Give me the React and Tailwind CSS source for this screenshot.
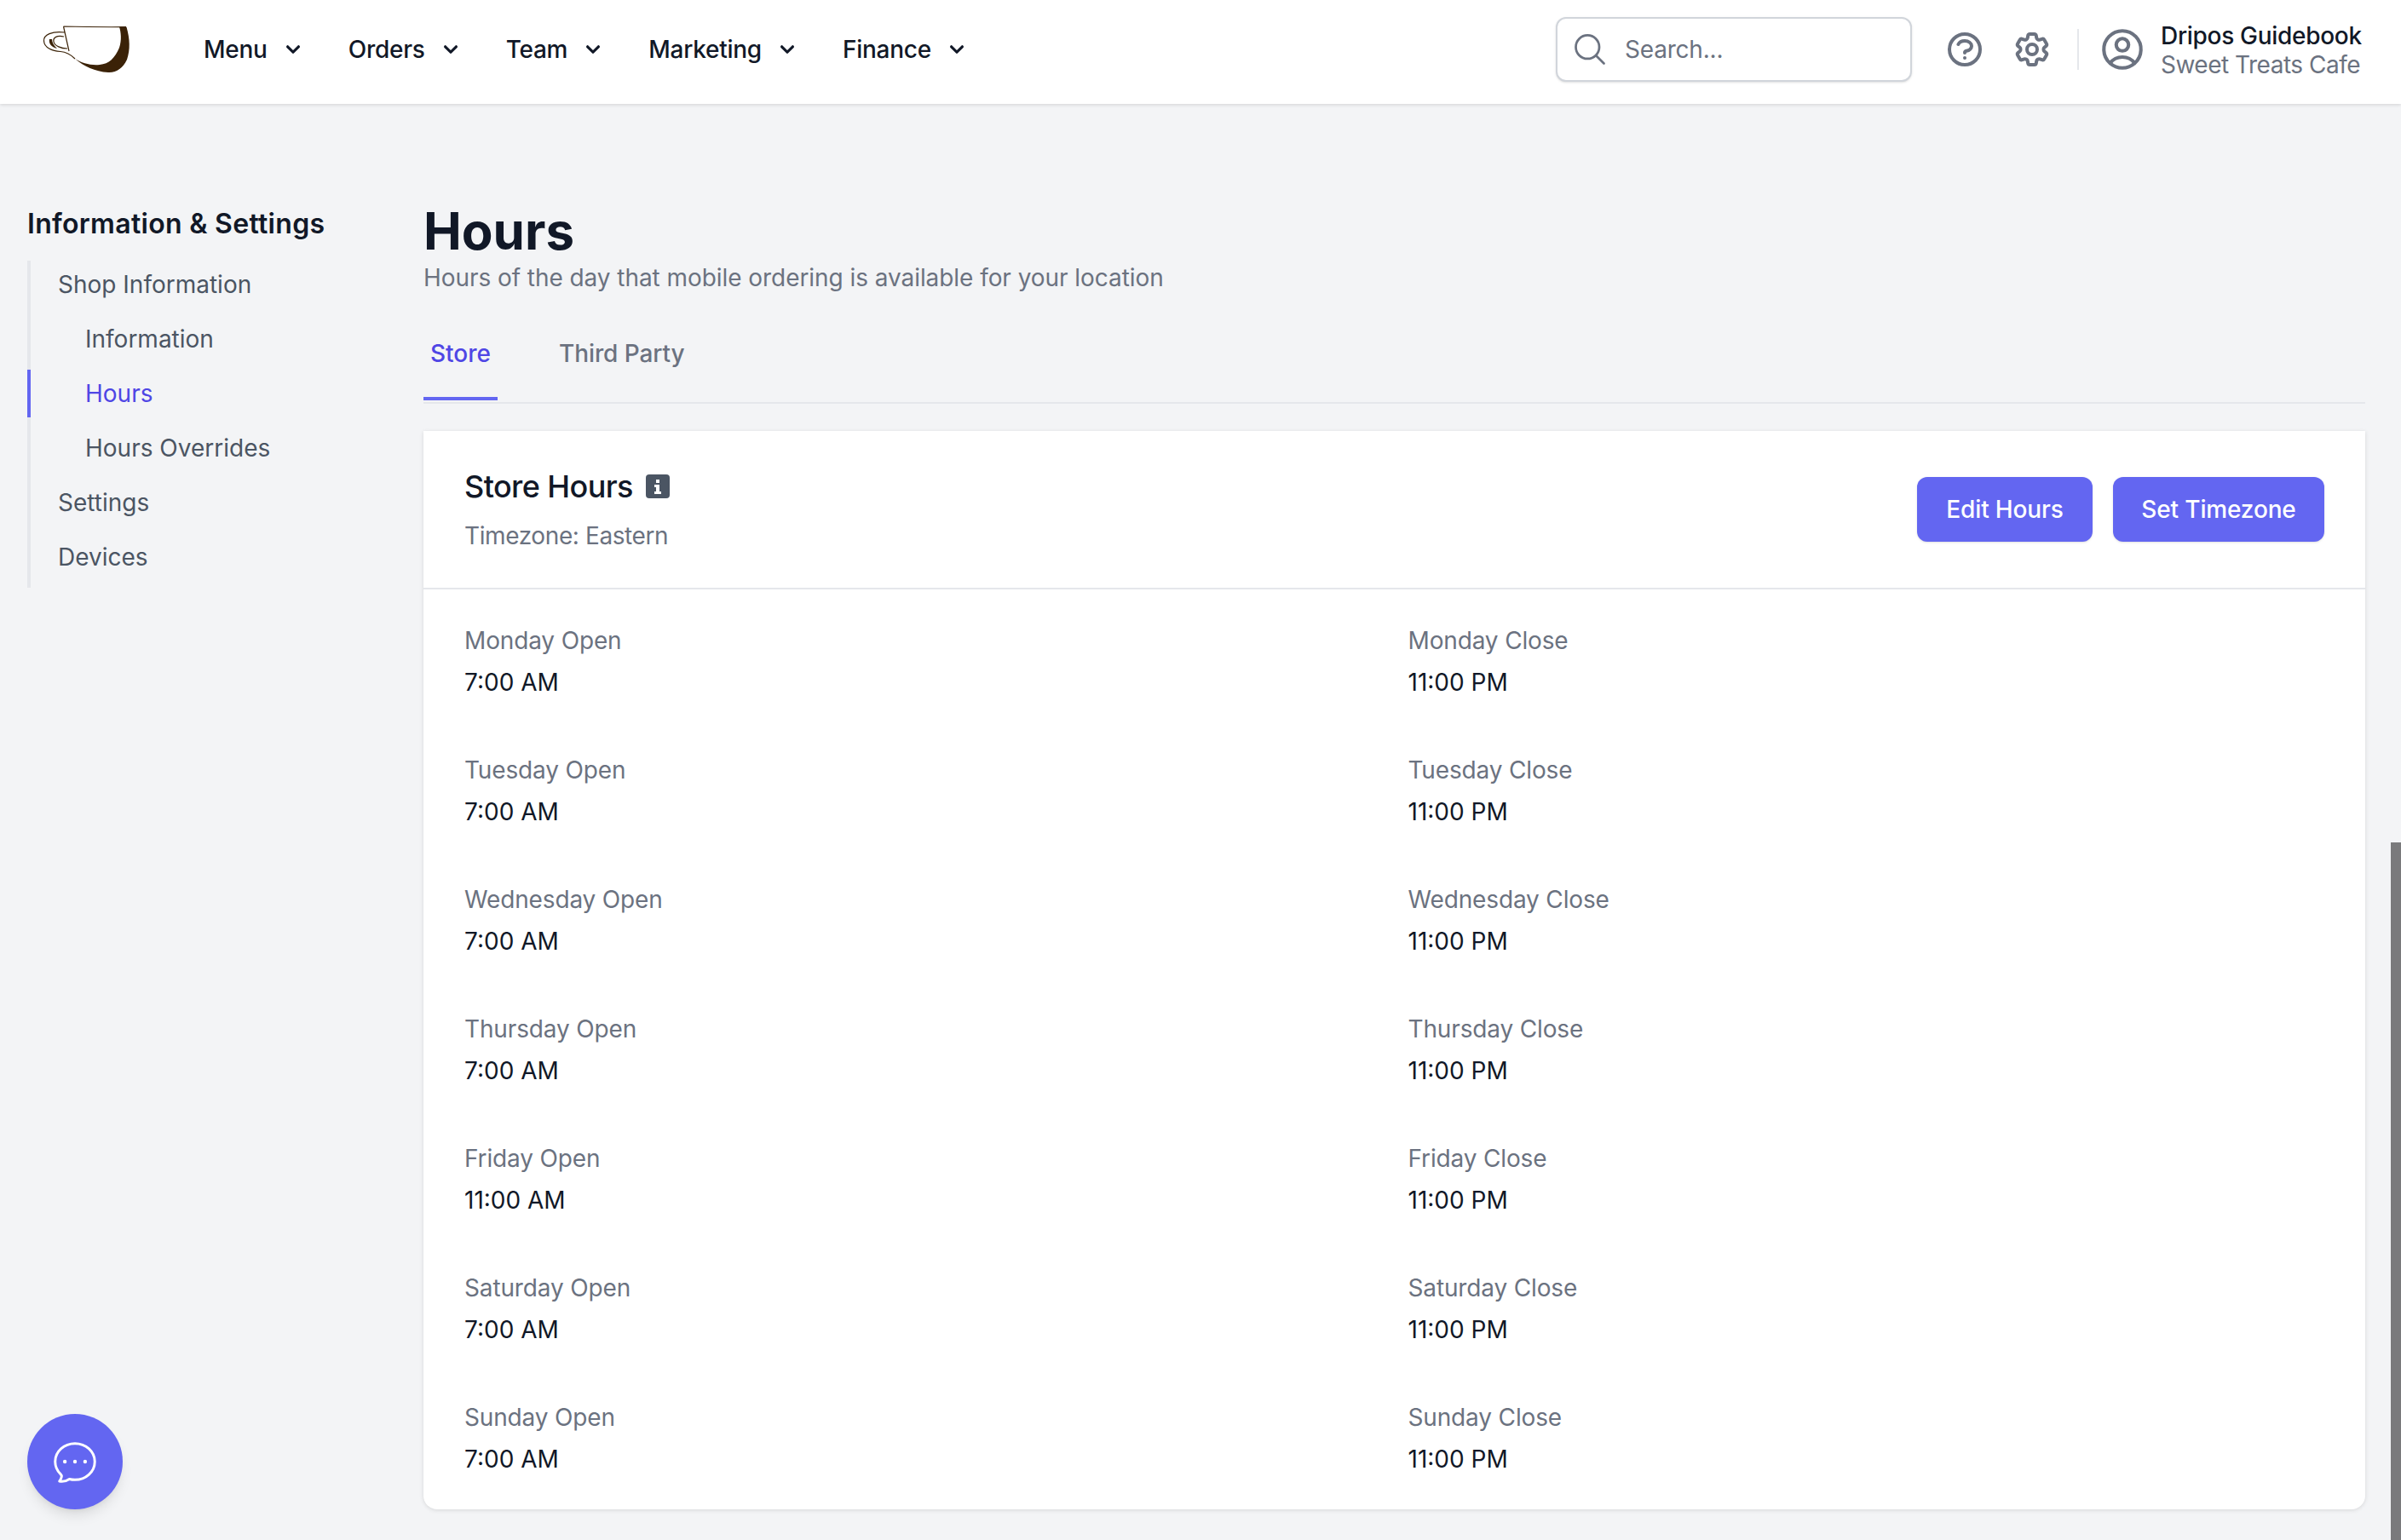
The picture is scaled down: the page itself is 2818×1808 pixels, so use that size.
import React from "react";

const Chevron = () => (
  <svg viewBox="0 0 20 20" fill="currentColor" className="w-[32px] h-[32px] ml-[14px] text-[#111827]">
    <path fillRule="evenodd" clipRule="evenodd" d="M5.293 7.293a1 1 0 011.414 0L10 10.586l3.293-3.293a1 1 0 111.414 1.414l-4 4a1 1 0 01-1.414 0l-4-4a1 1 0 010-1.414z" />
  </svg>
);

const Logo = () => (
  <svg viewBox="0 0 140 90" className="w-[140px] h-[90px] -mt-[6px] shrink-0">
    <path d="M43.5 21 L117 21.7 C121 36 122 48 118 60 C113 70 106 75.5 96 75 C80 74 68 68 57 59 C52 55 47 52 40 51 C28 50 20 45 20 38 C20 31 28 27.5 45 28 Z" fill="#fff" />
    <path d="M43.5 21 Q80 22 117 21.7 M43.5 21 L50 50 M45 28 C30 26 20 31 20.5 38 C21 46 30 50 40 50.5 C47 51 52 54 57 59" fill="none" stroke="#3b2207" strokeWidth="1.2" />
    <path d="M44 33 C36 31 31 34 32 39 C33 44 41 47 48 47" fill="none" stroke="#3b2207" strokeWidth="1.2" />
    <path d="M27 36 C26 41 29 45 36 47 C32 43 30 40 30 36 Z" fill="#3b2207" />
    <path d="M109 21.5 L117.5 21.7 C121.5 36 122 48 118 60 C113 70 106 75.5 96 75 C80 74 68 68 57 59 C65 64 75 67 86 66 C97 65 104 58 109 46 C112 37 111 28 109 21.5 Z" fill="#3b2207" />
  </svg>
);

const NavItem = ({ label }) => (
  <div className="flex items-center">
    <span className="text-[28px] leading-[40px] font-medium tracking-[-0.25px] text-[#111827]">{label}</span>
    <Chevron />
  </div>
);

const SideItem = ({ label, sub, active }) => (
  <div
    className={
      "h-[56px] flex items-center text-[28px] leading-[40px] font-normal " +
      (sub ? "pl-[64px] " : "pl-[32px] ") +
      (active ? "border-l-4 border-[#6366f1] -ml-[4px] text-[#4f46e5]" : "text-[#4b5563]")
    }
  >
    {label}
  </div>
);

const Field = ({ label, value }) => (
  <div>
    <div className="text-[28px] leading-[40px] tracking-[-0.15px] text-[#6b7280]">{label}</div>
    <div className="mt-[9px] text-[28px] leading-[40px] text-[#111827]">{value}</div>
  </div>
);

const days = [
  ["Monday", "7:00 AM", "11:00 PM"],
  ["Tuesday", "7:00 AM", "11:00 PM"],
  ["Wednesday", "7:00 AM", "11:00 PM"],
  ["Thursday", "7:00 AM", "11:00 PM"],
  ["Friday", "11:00 AM", "11:00 PM"],
  ["Saturday", "7:00 AM", "11:00 PM"],
  ["Sunday", "7:00 AM", "11:00 PM"],
];

export default function App() {
  return (
    <div className="relative h-[1808px] overflow-hidden bg-[#f3f4f6] font-['Inter',sans-serif]">
      <header className="relative z-10 h-[122px] pb-[6px] bg-white shadow-[0_1px_4px_rgba(0,0,0,0.14)] flex items-center pl-[31px] pr-[46px]">
        <Logo />
        <nav className="flex items-center gap-[49px] ml-[68px]">
          <NavItem label="Menu" />
          <NavItem label="Orders" />
          <NavItem label="Team" />
          <NavItem label="Marketing" />
          <NavItem label="Finance" />
        </nav>
        <div className="ml-auto flex items-center">
          <div className="w-[418px] h-[76px] rounded-[12px] border-2 border-[#d1d5db] bg-white shadow-sm flex items-center pl-[16px]">
            <svg viewBox="0 0 24 24" fill="none" stroke="#6b7280" strokeWidth="1.5" strokeLinecap="round" strokeLinejoin="round" className="w-[44px] h-[44px]">
              <path d="M21 21l-5.197-5.197m0 0A7.5 7.5 0 105.196 5.196a7.5 7.5 0 0010.607 10.607z" />
            </svg>
            <span className="ml-[19px] text-[28px] leading-[40px] tracking-[-0.2px] text-[#6b7280]">Search...</span>
          </div>
          <svg viewBox="0 0 24 24" fill="none" stroke="#6b7280" strokeWidth="2" strokeLinecap="round" strokeLinejoin="round" className="w-[48px] h-[48px] ml-[38px]">
            <path d="M8.228 9c.549-1.165 2.03-2 3.772-2 2.21 0 4 1.343 4 3 0 1.4-1.278 2.575-3.006 2.907-.542.104-.994.54-.994 1.093m0 3h.01M21 12a9 9 0 11-18 0 9 9 0 0118 0z" />
          </svg>
          <svg viewBox="0 0 24 24" fill="none" stroke="#6b7280" strokeWidth="2" strokeLinecap="round" strokeLinejoin="round" className="w-[48px] h-[48px] ml-[31px]">
            <path d="M9.594 3.94c.09-.542.56-.94 1.11-.94h2.593c.55 0 1.02.398 1.11.94l.213 1.281c.063.374.313.686.645.87.074.04.147.083.22.127.325.196.72.257 1.075.124l1.217-.456a1.125 1.125 0 011.37.49l1.296 2.247a1.125 1.125 0 01-.26 1.431l-1.003.827c-.293.241-.438.613-.43.992a7.723 7.723 0 010 .255c-.008.378.137.75.43.991l1.004.827c.424.35.534.955.26 1.43l-1.298 2.247a1.125 1.125 0 01-1.369.491l-1.217-.456c-.355-.133-.75-.072-1.076.124a6.57 6.57 0 01-.22.128c-.331.183-.581.495-.644.869l-.213 1.28c-.09.543-.56.941-1.11.941h-2.594c-.55 0-1.02-.398-1.11-.94l-.213-1.281c-.062-.374-.312-.686-.644-.87a6.52 6.52 0 01-.22-.127c-.325-.196-.72-.257-1.076-.124l-1.217.456a1.125 1.125 0 01-1.369-.49l-1.297-2.247a1.125 1.125 0 01.26-1.431l1.004-.827c.292-.24.437-.613.43-.992a6.932 6.932 0 010-.255c.007-.378-.138-.75-.43-.992l-1.004-.827a1.125 1.125 0 01-.26-1.43l1.297-2.247a1.125 1.125 0 011.37-.491l1.216.456c.356.133.751.072 1.076-.124.072-.044.146-.087.22-.128.332-.183.582-.495.644-.869l.214-1.281z" />
            <path d="M15 12a3 3 0 11-6 0 3 3 0 016 0z" />
          </svg>
          <div className="w-[2px] h-[48px] bg-[#e5e7eb] ml-[29px]" />
          <svg viewBox="0 0 24 24" fill="none" stroke="#6b7280" strokeWidth="1.7" strokeLinecap="round" strokeLinejoin="round" className="w-[58px] h-[58px] ml-[22px]">
            <path d="M17.982 18.725A7.488 7.488 0 0012 15.75a7.488 7.488 0 00-5.982 2.975m11.964 0a9 9 0 10-11.963 0m11.963 0A8.966 8.966 0 0112 21a8.966 8.966 0 01-5.982-2.275M15 9.75a3 3 0 11-6 0 3 3 0 016 0z" />
          </svg>
          <div className="ml-[16px] w-[236px] pt-[2px] flex flex-col whitespace-nowrap">
            <span className="text-[28px] leading-[34px] font-medium tracking-[-0.3px] text-[#111827]">Dripos Guidebook</span>
            <span className="text-[28px] leading-[34px] tracking-[-0.5px] text-[#6b7280]">Sweet Treats Cafe</span>
          </div>
        </div>
      </header>

      <div className="flex">
        <aside className="w-[497px] shrink-0 pl-[32px] pt-[117px]">
          <div className="text-[32px] leading-[48px] font-semibold tracking-[0.3px] text-[#111827]">Information &amp; Settings</div>
          <div className="mt-[19px] border-l-4 border-[#e5e7eb] flex flex-col gap-[8px] pb-[8px]">
            <SideItem label="Shop Information" />
            <SideItem label="Information" sub />
            <SideItem label="Hours" sub active />
            <SideItem label="Hours Overrides" sub />
            <SideItem label="Settings" />
            <SideItem label="Devices" />
          </div>
        </aside>

        <main className="w-[2279px] pt-[113px]">
          <h1 className="text-[60px] leading-[72px] font-bold text-[#111827]">Hours</h1>
          <p className="text-[28px] leading-[38px] tracking-[-0.06px] text-[#6b7280]">Hours of the day that mobile ordering is available for your location</p>

          <div className="mt-[30px] h-[99px] border-b-2 border-[#e5e7eb] flex items-start">
            <div className="h-[95px] pt-[20px] px-[8px] border-b-4 border-[#6366f1] text-[28px] leading-[40px] font-medium text-[#4f46e5]">Store</div>
            <div className="h-[95px] pt-[20px] ml-[64px] px-[8px] text-[28px] leading-[40px] font-medium tracking-[-0.1px] text-[#6b7280]">Third Party</div>
          </div>

          <section className="mt-[32px] bg-white rounded-b-[16px] shadow-[0_1px_5px_rgba(0,0,0,0.12)]">
            <div className="h-[186px] border-b-2 border-[#e5e7eb] px-[48px] flex items-center justify-between">
              <div>
                <div className="flex items-center">
                  <span className="text-[36px] leading-[48px] font-medium tracking-[-0.6px] text-[#111827]">Store Hours</span>
                  <svg viewBox="0 0 28 28" className="w-[28px] h-[28px] ml-[15px]">
                    <rect width="28" height="28" rx="4" fill="#4b5563" />
                    <rect x="12" y="6" width="4" height="4" fill="#fff" />
                    <path d="M10 12h6v8h2v3h-8v-3h2v-5h-2z" fill="#fff" />
                  </svg>
                </div>
                <div className="mt-[14px] text-[28px] leading-[40px] tracking-[-0.4px] text-[#6b7280]">Timezone: Eastern</div>
              </div>
              <div className="flex gap-[24px]">
                <button className="h-[76px] w-[206px] rounded-[12px] bg-[#6366f1] text-white text-[28px] leading-[40px] font-medium tracking-[-0.15px] shadow-sm">Edit Hours</button>
                <button className="h-[76px] w-[248px] rounded-[12px] bg-[#6366f1] text-white text-[28px] leading-[40px] font-medium tracking-[-0.15px] shadow-sm">Set Timezone</button>
              </div>
            </div>
            <div className="px-[48px] pt-[40px] pb-[39px] grid grid-cols-2 gap-x-[32px] gap-y-[63px]">
              {days.map(([d, o, c]) => (
                <React.Fragment key={d}>
                  <Field label={`${d} Open`} value={o} />
                  <Field label={`${d} Close`} value={c} />
                </React.Fragment>
              ))}
            </div>
          </section>
        </main>
      </div>

      <div className="absolute right-0 top-[989px] bottom-0 w-[12px] bg-[#7a7a7c]" />

      <button className="absolute left-[32px] top-[1660px] w-[112px] h-[112px] rounded-full bg-[#6366f1] flex items-center justify-center shadow-[0_10px_15px_-3px_rgba(0,0,0,0.1),0_4px_6px_-4px_rgba(0,0,0,0.1)]">
        <svg viewBox="0 0 24 24" fill="none" stroke="#fff" strokeWidth="1.15" strokeLinecap="round" strokeLinejoin="round" className="w-[62px] h-[62px]">
          <path d="M21 12c0 4.556-4.03 8.25-9 8.25a9.764 9.764 0 01-2.555-.337A5.972 5.972 0 015.41 20.97a5.969 5.969 0 01-.474-.065 4.48 4.48 0 00.978-2.025c.09-.457-.133-.901-.467-1.226C3.93 16.178 3 14.189 3 12c0-4.556 4.03-8.25 9-8.25s9 3.694 9 8.25z" />
          <circle cx="7.4" cy="12" r="0.85" fill="#fff" stroke="none" />
          <circle cx="12" cy="12" r="0.85" fill="#fff" stroke="none" />
          <circle cx="16.6" cy="12" r="0.85" fill="#fff" stroke="none" />
        </svg>
      </button>
    </div>
  );
}
